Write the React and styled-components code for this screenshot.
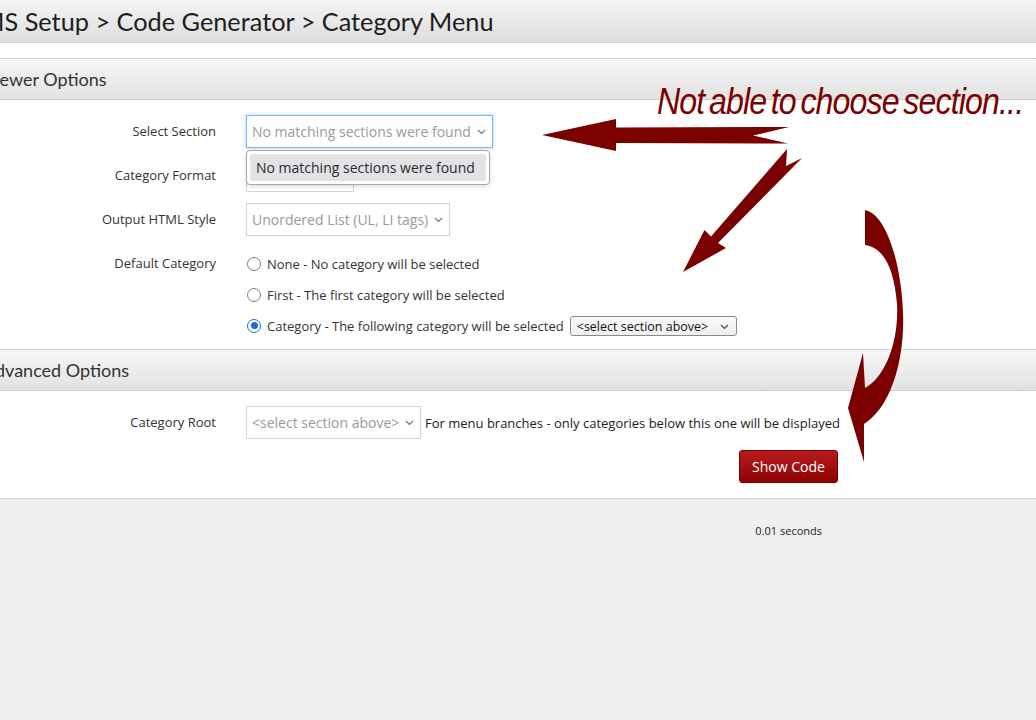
import React from 'react';
import styled, { createGlobalStyle } from 'styled-components';

const GlobalStyle = createGlobalStyle`
  html, body {
    margin: 0;
    padding: 0;
    background: #efefef;
    font-family: "Open Sans", "Liberation Sans", sans-serif;
    color: #333;
  }
  * { box-sizing: border-box; }
`;

const Page = styled.div`
  position: relative;
  width: 1036px;
  min-height: 720px;
  overflow: hidden;
`;

const TitleBar = styled.div`
  height: 43px;
  background: linear-gradient(#f4f4f4, #dedede);
  border-bottom: 1px solid #cfcfcf;
  display: flex;
  align-items: center;
  white-space: nowrap;
`;

const Title = styled.h1`
  margin: 0 0 0 -19px;
  font-family: Lato, "Noto Sans", sans-serif;
  font-weight: 400;
  font-size: 25.3px;
  color: #1e1e1e;
`;

const Panel = styled.div`
  background: #fff;
  padding-top: 15px;
  border-bottom: 1px solid #d6d6d6;
`;

const SectionHeader = styled.h2`
  margin: 0;
  height: 42px;
  display: flex;
  align-items: center;
  background: linear-gradient(#f7f7f7, #e2e2e2);
  border-top: 1px solid #d2d2d2;
  border-bottom: 1px solid #cdcdcd;
  font-family: Lato, "Noto Sans", sans-serif;
  font-weight: 400;
  font-size: 18px;
  color: #333;
  white-space: nowrap;
  span { margin-left: ${(p) => p.$shift}px; }
`;

const FormBody = styled.div`
  width: 838px;
  padding: 15px 0 ${(p) => p.$bottom}px;
`;

const Field = styled.div`
  display: grid;
  grid-template-columns: 216px 1fr;
  column-gap: 30px;
  align-items: start;
  margin-bottom: ${(p) => p.$gap}px;
`;

const Label = styled.div`
  text-align: right;
  font-size: 13px;
  color: #333;
  line-height: ${(p) => p.$lh}px;
`;

const Control = styled.div`
  position: relative;
  display: flex;
  align-items: center;
  gap: 4px;
  min-height: 33px;
`;

const SelectBox = styled.div`
  width: ${(p) => p.$w}px;
  height: 33px;
  display: flex;
  align-items: center;
  padding: 0 6px 0 5px;
  background: #fff;
  border: 1px solid ${(p) => (p.$focus ? '#7fb5e4' : '#d4d4d4')};
  box-shadow: ${(p) => (p.$focus ? '0 0 4px rgba(102, 165, 230, 0.55)' : 'none')};
  font-size: 14px;
  color: #9a9a9a;
  white-space: nowrap;
  svg { margin-left: auto; flex-shrink: 0; }
`;

const Chevron = ({ color = '#777' }) => (
  <svg width="9" height="6" viewBox="0 0 9 6">
    <polyline points="1,1 4.5,4.5 8,1" fill="none" stroke={color} strokeWidth="1.2" />
  </svg>
);

const Menu = styled.div`
  position: absolute;
  top: 35px;
  left: 0;
  width: 244px;
  padding: 3px;
  background: #fff;
  border: 1px solid #a9a9a9;
  border-radius: 4px;
  box-shadow: 0 2px 4px rgba(0, 0, 0, 0.12);
  z-index: 2;
`;

const MenuItem = styled.div`
  background: #e2e2e7;
  border-radius: 3px;
  padding: 4px 6px;
  font-size: 14px;
  color: #2a2a2a;
  white-space: nowrap;
`;

const RadioList = styled.div`
  display: flex;
  flex-direction: column;
`;

const RadioRow = styled.label`
  height: 31px;
  display: flex;
  align-items: center;
  gap: 6px;
  font-size: 13px;
  color: #333;
  white-space: nowrap;
`;

const RadioDot = styled.span`
  width: 14px;
  height: 14px;
  margin-left: 1px;
  border-radius: 50%;
  border: 1.5px solid ${(p) => (p.$on ? '#1a6fd6' : '#808080')};
  display: flex;
  align-items: center;
  justify-content: center;
  &::after {
    content: '';
    width: 7px;
    height: 7px;
    border-radius: 50%;
    background: ${(p) => (p.$on ? '#1a6fd6' : 'transparent')};
  }
`;

const MiniSelect = styled.span`
  width: 167px;
  height: 20px;
  margin-left: 0;
  display: inline-flex;
  align-items: center;
  justify-content: space-between;
  padding: 2px 7px 0 6px;
  background: linear-gradient(#fafafa, #efefef);
  border: 1px solid #8a8a8a;
  border-radius: 3px;
  font-size: 12.5px;
  color: #111;
`;

const Hint = styled.span`
  font-size: 13px;
  color: #222;
  white-space: nowrap;
`;

const ButtonRow = styled.div`
  display: flex;
  justify-content: flex-end;
`;

const Button = styled.button`
  width: 99px;
  height: 33px;
  border: 1px solid #7d0000;
  border-radius: 3px;
  background: linear-gradient(#b71c1c, #8e0303);
  color: #fff;
  font-family: "Open Sans", "Liberation Sans", sans-serif;
  font-size: 14px;
  cursor: pointer;
`;

const Footer = styled.div`
  display: flex;
  justify-content: flex-end;
  width: 822px;
  padding-top: 24px;
  font-size: 11px;
  color: #222;
`;

const Overlay = styled.svg`
  position: absolute;
  top: 0;
  left: 0;
  pointer-events: none;
  z-index: 3;
`;

const Note = styled.div`
  position: absolute;
  top: 81px;
  left: 657px;
  font-family: "Liberation Sans", sans-serif;
  font-style: italic;
  font-size: 37px;
  letter-spacing: -1px;
  word-spacing: -4px;
  color: #7b0000;
  white-space: nowrap;
  transform: scaleX(0.868);
  transform-origin: left center;
  z-index: 3;
`;

const ARROW = '#7b0000';

export default function App() {
  return (
    <Page>
      <GlobalStyle />
      <TitleBar>
        <Title>MS Setup &gt; Code Generator &gt; Category Menu</Title>
      </TitleBar>
      <Panel>
        <SectionHeader $shift={-17}>
          <span>Viewer Options</span>
        </SectionHeader>
        <FormBody $bottom={8}>
          <Field $gap={11}>
            <Label $lh={33}>Select Section</Label>
            <Control>
              <SelectBox $w={247} $focus>
                No matching sections were found
                <Chevron />
              </SelectBox>
              <Menu>
                <MenuItem>No matching sections were found</MenuItem>
              </Menu>
            </Control>
          </Field>
          <Field $gap={11}>
            <Label $lh={33}>Category Format</Label>
            <Control>
              <SelectBox $w={108} />
            </Control>
          </Field>
          <Field $gap={12}>
            <Label $lh={33}>Output HTML Style</Label>
            <Control>
              <SelectBox $w={204}>
                Unordered List (UL, LI tags)
                <Chevron />
              </SelectBox>
            </Control>
          </Field>
          <Field $gap={0}>
            <Label $lh={31}>Default Category</Label>
            <RadioList>
              <RadioRow>
                <RadioDot />
                None - No category will be selected
              </RadioRow>
              <RadioRow>
                <RadioDot />
                First - The first category will be selected
              </RadioRow>
              <RadioRow>
                <RadioDot $on />
                Category - The following category will be selected
                <MiniSelect>
                  &lt;select section above&gt;
                  <Chevron color="#444" />
                </MiniSelect>
              </RadioRow>
            </RadioList>
          </Field>
        </FormBody>
        <SectionHeader $shift={-17}>
          <span>Advanced Options</span>
        </SectionHeader>
        <FormBody $bottom={15}>
          <Field $gap={11}>
            <Label $lh={33}>Category Root</Label>
            <Control>
              <SelectBox $w={175}>
                &lt;select section above&gt;
                <Chevron />
              </SelectBox>
              <Hint>For menu branches - only categories below this one will be displayed</Hint>
            </Control>
          </Field>
          <ButtonRow>
            <Button>Show Code</Button>
          </ButtonRow>
        </FormBody>
      </Panel>
      <Footer>0.01 seconds</Footer>

      <Note>Not able to choose section...</Note>
      <Overlay width="1036" height="720" viewBox="0 0 1036 720">
        <polygon
          fill={ARROW}
          points="542,135 616,119 616,127.5 789,127 753,135.5 788,143.5 616,143 616,151"
        />
        <polygon
          fill={ARROW}
          points="683,272 704.5,230 711,236.5 787,149 786,166 802,158 718,243 726,248"
        />
        <path
          fill={ARROW}
          d="M865,210 C886,214 901,262 903,312 C905,362 890,408 864,424 L864,462 L848,408 L863,353 L865,388 C884,378 899,344 897,304 C894,268 884,248 865,245 Z"
        />
      </Overlay>
    </Page>
  );
}
